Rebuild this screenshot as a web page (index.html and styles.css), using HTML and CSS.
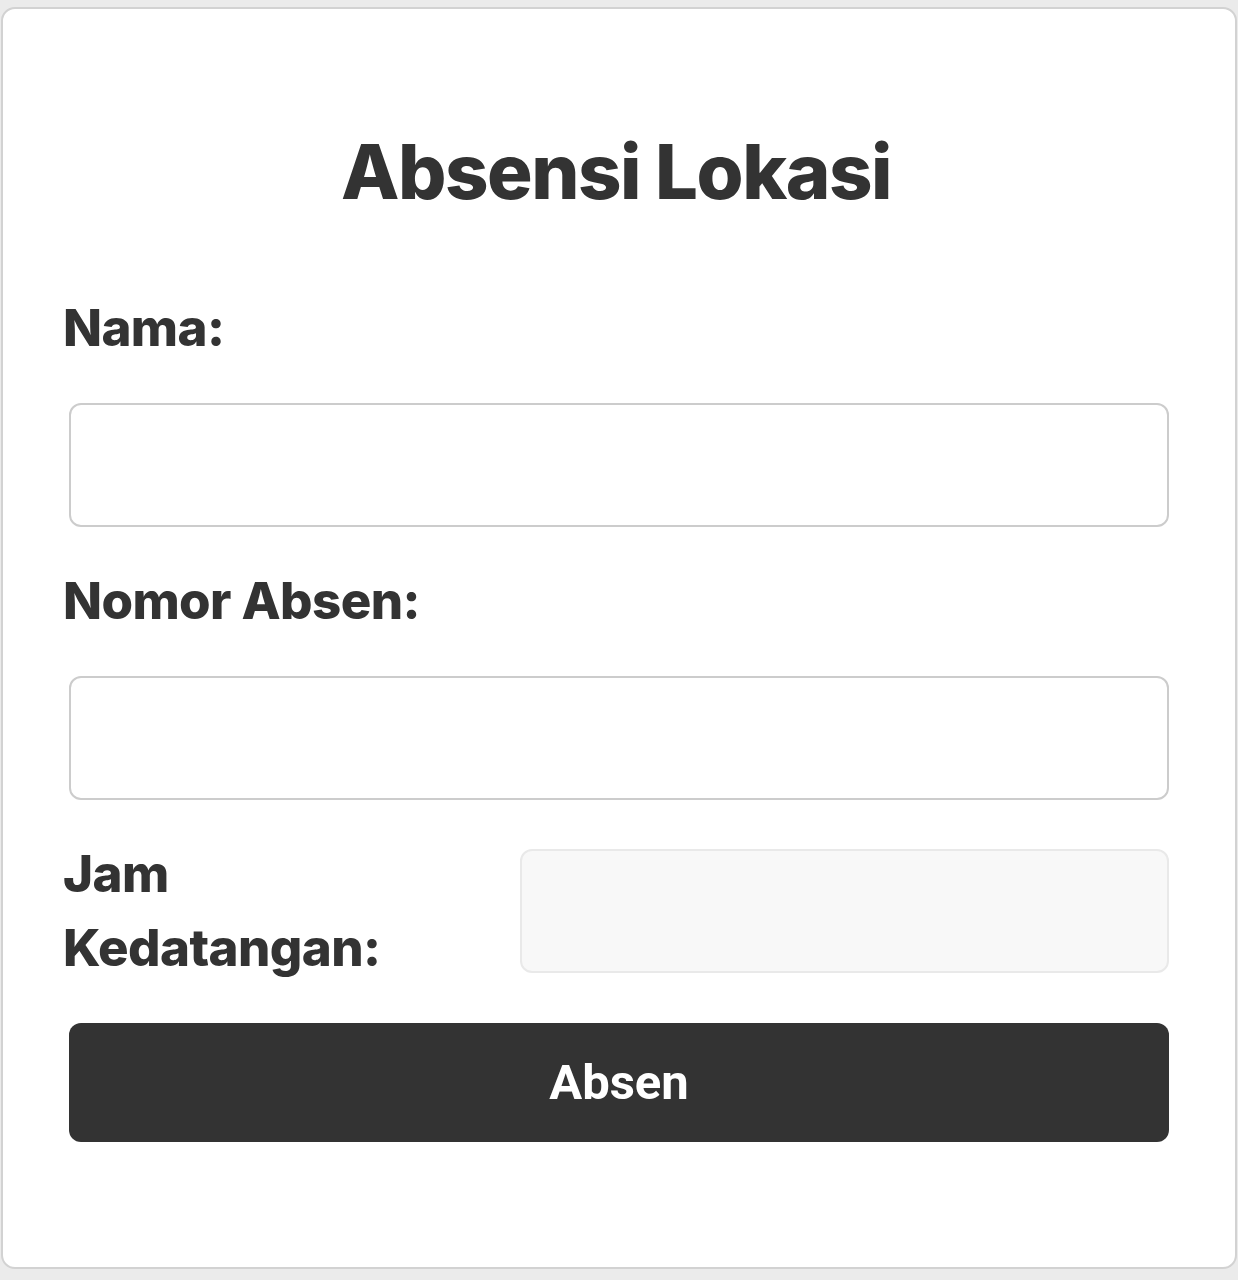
FILE: index.html
```html
<!DOCTYPE html>
<html lang="id">
<head>
<meta charset="utf-8">
<title>Absensi Lokasi</title>
<link rel="stylesheet" href="styles.css">
</head>
<body>
<div class="card">
  <h1 class="title">Absensi Lokasi</h1>
  <form class="form">
    <label class="label" for="nama">Nama:</label>
    <input class="input" id="nama" type="text">
    <label class="label" for="nomor">Nomor Absen:</label>
    <input class="input" id="nomor" type="text">
    <div class="row">
      <label class="label label-side" for="jam">Jam Kedatangan:</label>
      <input class="input input-disabled" id="jam" type="text" disabled>
    </div>
    <button class="btn" type="button">Absen</button>
  </form>
</div>
</body>
</html>
```

FILE: styles.css
```css
html, body {
  margin: 0;
  padding: 0;
  background: #ebebeb;
}
body {
  padding: 7px 1px 10px 1px;
  font-family: Inter, "Noto Sans", sans-serif;
  color: #333;
}
.card {
  background: #fff;
  border: 2px solid #d2d2d2;
  border-radius: 14px;
  padding: 114px 66px 125px 60px;
}
.title {
  margin: 0;
  text-align: center;
  font-size: 76px;
  line-height: 96px;
  font-weight: 800;
  letter-spacing: -1.5px;
}
.form {
  display: flex;
  flex-direction: column;
  margin-top: 72px;
}
.label {
  display: block;
  font-size: 51px;
  line-height: 74px;
  font-weight: 800;
  letter-spacing: -0.6px;
  color: #333;
}
.input {
  box-sizing: border-box;
  display: block;
  margin: 38px 0 37px 6px;
  width: calc(100% - 6px);
  height: 124px;
  border: 2px solid #cccccc;
  border-radius: 12px;
  background: #fff;
  font-size: 40px;
  padding: 0 20px;
}
.row {
  display: flex;
  align-items: center;
  gap: 14px;
}
.label-side {
  box-sizing: border-box;
  flex: 0 0 443px;
  padding-right: 80px;
}
.input-disabled {
  flex: 1;
  margin: 0;
  width: auto;
  background: #f8f8f8;
  border-color: #e9e9e9;
}
.btn {
  margin: 38px 0 0 6px;
  height: 119px;
  border: none;
  border-radius: 12px;
  background: #333333;
  color: #fff;
  font-family: Roboto, "Liberation Sans", sans-serif;
  font-weight: 700;
  font-size: 49px;
  cursor: pointer;
}
```
